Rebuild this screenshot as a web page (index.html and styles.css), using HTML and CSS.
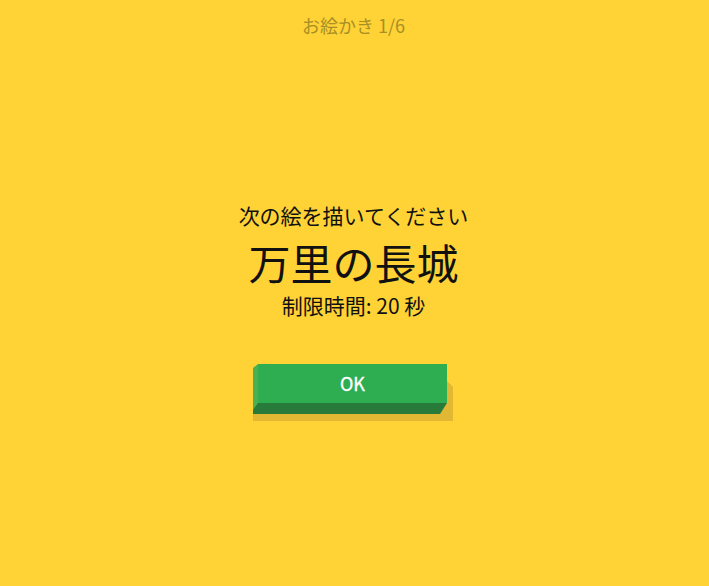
FILE: index.html
```html
<!DOCTYPE html>
<html lang="ja">
<head>
    <meta charset="UTF-8">
    <meta name="viewport" content="width=device-width, initial-scale=1.0">
    <title>お絵かき</title>
    <link rel="stylesheet" href="styles.css">
</head>
<body>
    <header class="round">お絵かき 1/6</header>

    <main class="prompt">
        <p class="prompt-lead">次の絵を描いてください</p>
        <h1 class="prompt-word">万里の長城</h1>
        <p class="prompt-time">制限時間: 20 秒</p>

        <button class="ok-button" type="button">
            <!-- 3D block: shadow, left side, bottom side, then the face -->
            <svg class="ok-shape" width="201" height="58" viewBox="0 0 201 58">
                <polygon points="0,16 193,16 200,23 200,57 0,57" fill="#e2b733"/>
                <polygon points="0,39 194,39 187,50 0,50" fill="#277a39"/>
                <polygon points="0,4 5,0 5,39 0,46" fill="#4cb052"/>
                <rect x="5" y="0" width="189" height="39" fill="#2ead51"/>
            </svg>
            <span class="ok-label">OK</span>
        </button>
    </main>
</body>
</html>
```

FILE: styles.css
```css
body {
    margin: 0;
    padding: 13px 2px 0 0;
    min-height: 100vh;
    box-sizing: border-box;
    background: #ffd236;
    color: #111;
    font-family: "Noto Sans CJK JP", "Noto Sans", sans-serif;
    text-align: center;
}

.round {
    font-size: 18px;
    line-height: 24px;
    color: #a88f25;
}

.prompt {
    display: flex;
    flex-direction: column;
    align-items: center;
    margin-top: 164px;
}

.prompt-lead {
    margin: 0;
    font-size: 21px;
    line-height: 28px;
}

.prompt-word {
    margin: 7px 0 0;
    font-size: 42px;
    font-weight: normal;
    line-height: 52px;
}

.prompt-time {
    margin: 3px 0 0;
    font-size: 21px;
    line-height: 28px;
}

.ok-button {
    display: grid;
    margin-top: 45px;
    padding: 0;
    border: 0;
    background: none;
    cursor: pointer;
    font-family: inherit;
}

.ok-shape,
.ok-label {
    grid-area: 1 / 1;
}

.ok-shape {
    display: block;
}

/* regular weight thickened a little, no medium cut installed */
.ok-label {
    align-self: start;
    height: 39px;
    padding-left: 5px;
    width: 189px;
    line-height: 39px;
    font-size: 18px;
    font-weight: normal;
    color: #fff;
    -webkit-text-stroke: 0.35px #fff;
}
```
